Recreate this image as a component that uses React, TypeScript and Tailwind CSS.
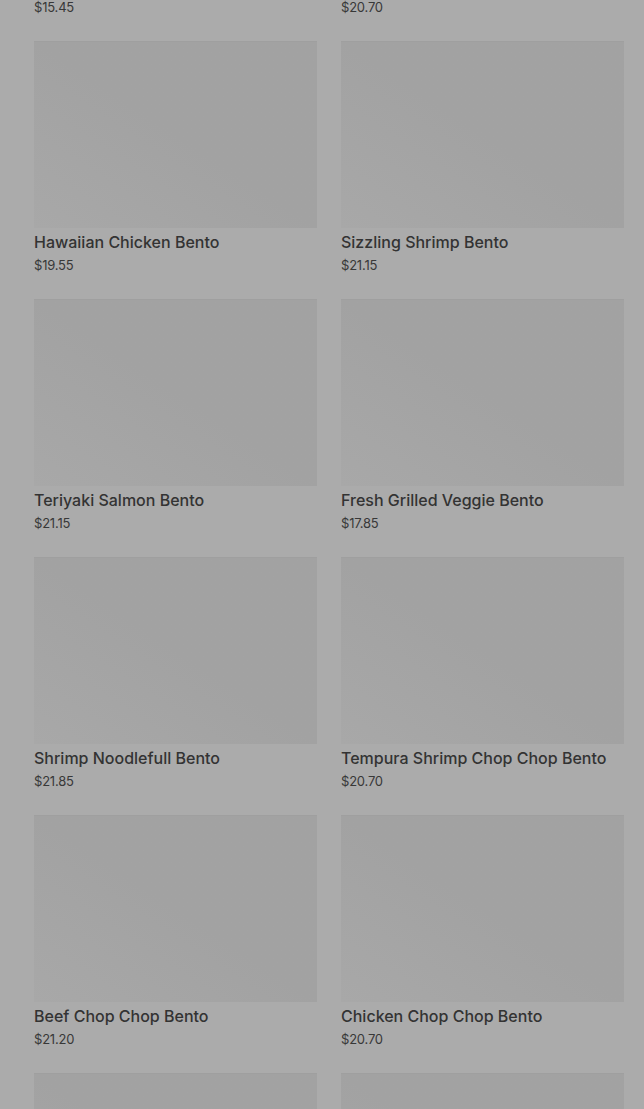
const items = [
  { name: "Teriyaki Chicken Bento", price: "$15.45" },
  { name: "Spicy Chicken Bento", price: "$20.70" },
  { name: "Hawaiian Chicken Bento", price: "$19.55" },
  { name: "Sizzling Shrimp Bento", price: "$21.15" },
  { name: "Teriyaki Salmon Bento", price: "$21.15" },
  { name: "Fresh Grilled Veggie Bento", price: "$17.85" },
  { name: "Shrimp Noodlefull Bento", price: "$21.85" },
  { name: "Tempura Shrimp Chop Chop Bento", price: "$20.70" },
  { name: "Beef Chop Chop Bento", price: "$21.20" },
  { name: "Chicken Chop Chop Bento", price: "$20.70" },
  { name: "Salmon Chop Chop Bento", price: "$22.10" },
  { name: "Veggie Chop Chop Bento", price: "$18.40" },
];

export default function App() {
  return (
    <div
      className="h-[1109px] overflow-hidden bg-[#ababab] text-[#333]"
      style={{ fontFamily: "Inter, 'Noto Sans', sans-serif" }}
    >
      <div className="mt-[-217px] grid grid-cols-[283px_283px] gap-x-6 gap-y-[26px] pl-[34px]">
        {items.map((item) => (
          <div key={item.name} className="flex flex-col">
            <div className="h-[187px] border-t border-[#9f9f9f] bg-gradient-to-tr from-[#a8a8a8] via-[#a2a2a2] to-[#a2a2a2]" />
            <div className="mt-[4px] text-[16px] font-medium leading-5 text-[#333]">{item.name}</div>
            <div className="mt-[5px] text-[13px] leading-4 tracking-[-0.2px] text-[#383838]">{item.price}</div>
          </div>
        ))}
      </div>
    </div>
  );
}
